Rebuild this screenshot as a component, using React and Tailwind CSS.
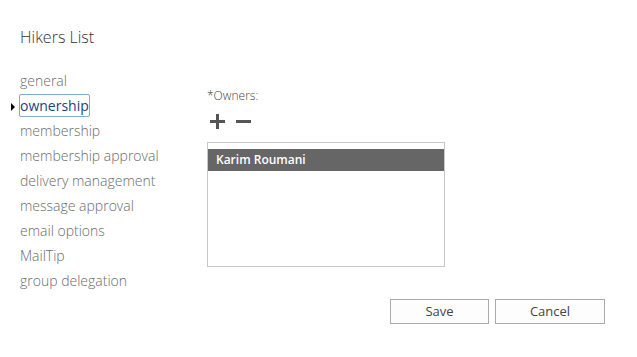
import React, { useState } from "react";

const sections = [
  "general",
  "ownership",
  "membership",
  "membership approval",
  "delivery management",
  "message approval",
  "email options",
  "MailTip",
  "group delegation",
];

export default function App() {
  const [active, setActive] = useState("ownership");

  return (
    <div
      className="w-[637px] h-[357px] bg-white text-[#333] overflow-hidden"
      style={{ fontFamily: '"Open Sans", "Noto Sans", sans-serif' }}
    >
      {/* Title */}
      <div className="pl-5 pt-[26px] h-[68px]">
        <h1 className="text-[16px] font-light text-[#333] leading-[22px]">Hikers List</h1>
      </div>

      <div className="flex">
        {/* Left nav */}
        <ul className="w-[207px] shrink-0 pl-5">
          {sections.map((s) => (
            <li key={s} className="relative h-[25px] flex items-center">
              {active === s && (
                <span className="absolute left-[-9px] top-[10px] w-0 h-0 border-y-[4px] border-y-transparent border-l-[4px] border-l-black" />
              )}
              <button
                onClick={() => setActive(s)}
                className={
                  active === s
                    ? "text-[14px] leading-[20px] text-[#1e3f7d] border border-[#84a8d8] rounded-[2px] px-0 -ml-px h-[23px]"
                    : "text-[14px] leading-[20px] text-[#6b6b6b] font-light"
                }
              >
                {s}
              </button>
            </li>
          ))}
        </ul>

        {/* Right panel */}
        <div className="flex flex-col pt-[20px]">
          <div className="text-[12px] leading-[16px] text-[#444] font-light">*Owners:</div>
          <div className="flex items-center gap-[11px] mt-[10px] pl-[3px] h-[14px]">
            <svg width="15" height="15" viewBox="0 0 15 15">
              <rect x="6" y="0" width="3" height="15" fill="#555" />
              <rect x="0" y="6" width="15" height="3" fill="#555" />
            </svg>
            <svg width="15" height="15" viewBox="0 0 15 15">
              <rect x="0" y="6" width="15" height="3" fill="#555" />
            </svg>
          </div>
          <div className="mt-[14px] w-[238px] h-[125px] border border-[#c8c8c8] pt-[6px]">
            <div className="bg-[#666] h-[22px] flex items-center px-2 text-white text-[12px] font-semibold">
              Karim Roumani
            </div>
          </div>
        </div>
      </div>

      {/* Buttons */}
      <div className="flex justify-end gap-[6px] pr-[32px] mt-[6px]">
        <button className="w-[99px] h-[25px] border border-[#ababab] bg-[#fdfdfd] text-[13px] text-[#444]">
          Save
        </button>
        <button className="w-[110px] h-[25px] border border-[#ababab] bg-[#fdfdfd] text-[13px] text-[#444]">
          Cancel
        </button>
      </div>
    </div>
  );
}
